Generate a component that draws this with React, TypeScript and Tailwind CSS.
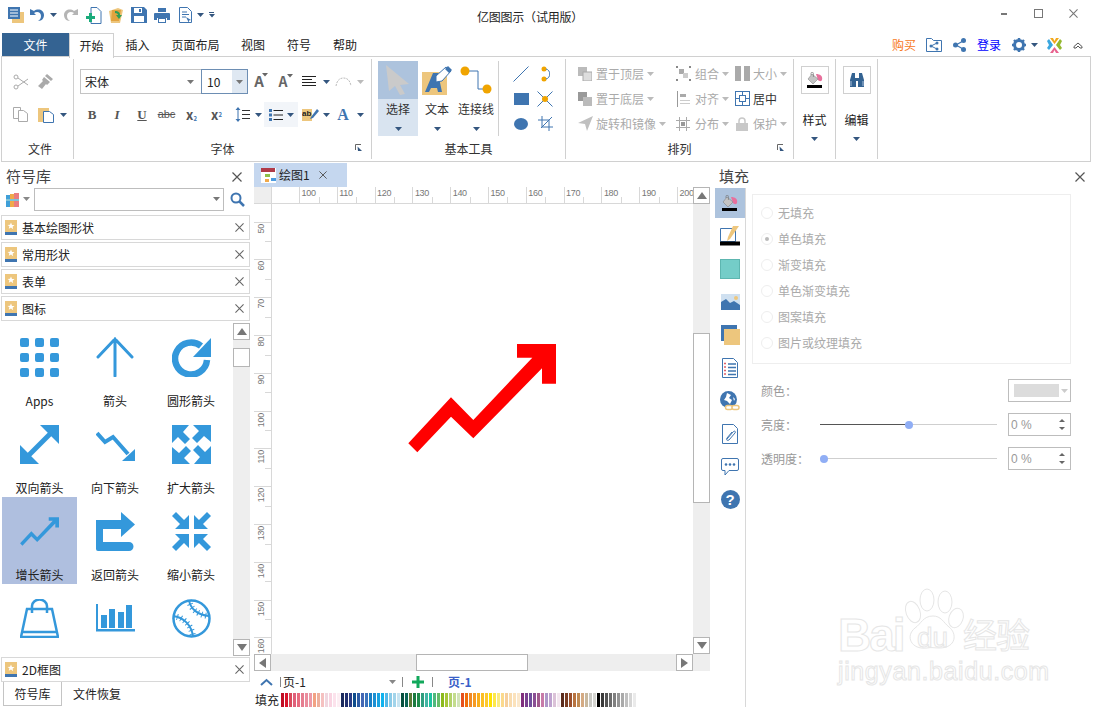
import React from 'react';
import type { ReactNode } from 'react';

const BLUE = '#3f75b0';
const SKY = '#3498db';
const GOLD = '#edc67d';

const Caret = ({ color = '#34567f', size = 3 }: { color?: string; size?: number }) => (
  <svg width={size * 2 + 1} height={size + 1} viewBox="0 0 7 4" className="shrink-0">
    <path d="M0 0h7L3.5 4z" fill={color} />
  </svg>
);

const Cross = ({ size = 9, color = '#666' }: { size?: number; color?: string }) => (
  <svg width={size} height={size} viewBox="0 0 10 10" className="shrink-0">
    <path d="M.5.5l9 9M9.5.5l-9 9" stroke={color} strokeWidth="1.2" fill="none" />
  </svg>
);

const Cell = ({ w, children }: { w: number; children?: ReactNode }) => (
  <div className="flex shrink-0 items-center justify-center h-full" style={{ width: w }}>
    {children}
  </div>
);

const GrowthArrow = ({ w, h, color }: { w: number; h: number; color: string }) => (
  <svg width={w} height={h} viewBox="408 344 148 109" className="shrink-0">
    <path d="M517 344h39v39.7h-14v-15.4l-68.7 70-22.3-21.6-33.7 35.6-9-9L451 397.3l22.3 22.7 59-62.3H517z" fill={color} />
  </svg>
);

/* quick access toolbar */
const QuickIcons = () => (
  <div className="flex items-center h-[30px] pl-[7px]">
    <Cell w={18}>
      <svg width="16" height="16" viewBox="0 0 16 16">
        <rect x="4" y="5" width="12" height="11" fill={GOLD} />
        <rect width="12" height="12" fill={BLUE} />
        <path d="M2 3h8M2 6h8M2 9h8" stroke="#fff" strokeWidth="1.2" />
      </svg>
    </Cell>
    <div className="w-[4px]" />
    <Cell w={16}>
      <svg width="16" height="14" viewBox="0 0 16 14">
        <path d="M1 1v6h6L5 5c3-2 7-1 7 3 0 2-1 4-3 5 4 0 6-3 6-6 0-5-6-7-10-4z" fill={BLUE} />
      </svg>
    </Cell>
    <div className="w-[3px]" />
    <Cell w={10}><Caret /></Cell>
    <div className="w-[4px]" />
    <Cell w={18}>
      <svg width="16" height="14" viewBox="0 0 16 14">
        <path d="M15 1v6H9l2-2C8 3 4 4 4 8c0 2 1 4 3 5-4 0-6-3-6-6 0-5 6-7 10-4z" fill="#b5b5b5" />
      </svg>
    </Cell>
    <div className="w-[3px]" />
    <Cell w={20}>
      <svg width="17" height="17" viewBox="0 0 17 17">
        <path d="M6 .5h6l4 4v12H6z" fill="#fff" stroke={BLUE} />
        <path d="M4 6v3H1v3h3v3h3v-3h3V9H7V6z" fill="#1aab7b" />
      </svg>
    </Cell>
    <div className="w-[3px]" />
    <Cell w={20}>
      <svg width="16" height="15" viewBox="0 0 16 15">
        <path d="M1 3l9-3 5 2-3 13H3z" fill={GOLD} />
        <path d="M4 2h9l-2 11H3z" fill="#e2a33f" />
        <path d="M7 3c3 0 5 1 5 4h2l-3 4-3-4h2c0-1-1-2-3-2z" fill="#2e9e57" />
      </svg>
    </Cell>
    <div className="w-[3px]" />
    <Cell w={20}>
      <svg width="16" height="16" viewBox="0 0 16 16">
        <path d="M0 0h13l3 3v13H0z" fill={BLUE} />
        <rect x="3" y="1" width="8" height="5" fill="#fff" />
        <rect x="3" y="9" width="10" height="6" fill="#fff" />
        <rect x="8" y="2" width="2" height="3" fill={BLUE} />
      </svg>
    </Cell>
    <div className="w-[3px]" />
    <Cell w={20}>
      <svg width="16" height="15" viewBox="0 0 16 15">
        <rect x="4" width="8" height="4" fill={BLUE} />
        <path d="M1 5h14a1 1 0 011 1v6h-3v-2H3v2H0V6a1 1 0 011-1z" fill={BLUE} />
        <rect x="4" y="10" width="8" height="5" fill={BLUE} />
        <rect x="5" y="11" width="6" height="3" fill="#fff" />
      </svg>
    </Cell>
    <div className="w-[3px]" />
    <Cell w={20}>
      <svg width="13" height="16" viewBox="0 0 13 16">
        <path d="M.5.5h8l4 4v11H.5z" fill="#fff" stroke={BLUE} />
        <path d="M3 5h5M3 7.500h7M3 10h4" stroke={BLUE} />
        <path d="M7 10l5 3-2 .5V16z" fill={BLUE} />
      </svg>
    </Cell>
    <Cell w={10}><Caret /></Cell>
    <div className="w-[3px]" />
    <div className="flex flex-col items-center gap-[1px] w-[7px]">
      <div className="w-[5px] h-[1px] bg-[#34567f]" />
      <Caret size={2.5} />
    </div>
  </div>
);

const TitleBar = () => (
  <div className="flex items-center h-[30px] relative shrink-0">
    <QuickIcons />
    <div className="w-[261px]" />
    <div className="text-[12px] text-[#222] tracking-[-0.2px] w-[108px] text-center mt-[3px]">亿图图示（试用版）</div>
    <div className="flex-1" />
    <div className="flex items-center h-[22px] pr-[3px] -mt-[4px]">
      <Cell w={35}><div className="w-[6px] h-[2px] bg-[#777] mt-[2px]" /></Cell>
      <Cell w={35}><div className="w-[9px] h-[9px] border border-[#777]" /></Cell>
      <Cell w={35}><Cross size={9} color="#777" /></Cell>
    </div>
  </div>
);

const MENU = [
  { t: '插入', w: 47 },
  { t: '页面布局', w: 69 },
  { t: '视图', w: 46 },
  { t: '符号', w: 46 },
  { t: '帮助', w: 46 },
];

const TabBar = () => (
  <div className="flex items-stretch h-[24px] mt-[3px] pl-[2px] shrink-0 text-[12px] text-[#222]">
    <div className="w-[67px] bg-[#346392] text-white flex items-center justify-center">文件</div>
    <div className="w-[45px] h-[25px] relative z-10 bg-white border border-b-0 border-[#d0d0d0] flex items-center justify-center">开始</div>
    {MENU.map((m) => (
      <div key={m.t} className="flex items-center justify-center" style={{ width: m.w }}>{m.t}</div>
    ))}
    <div className="flex-1" />
    <div className="flex items-center text-[12px]">
      <span className="text-[#f7781a] w-[24px]">购买</span>
      <div className="w-[10px]" />
      <svg width="16" height="14" viewBox="0 0 16 14" className="shrink-0">
        <path d="M.5.5h5l2 2h8v11H.5z" fill="#fff" stroke={BLUE} />
        <path d="M5 8l6-3M5 8l6 3" stroke={BLUE} />
        <circle cx="5" cy="8" r="1.500" fill={BLUE} />
        <circle cx="11" cy="5" r="1.500" fill={BLUE} />
        <circle cx="11" cy="11" r="1.500" fill={BLUE} />
      </svg>
      <div className="w-[11px]" />
      <svg width="13" height="14" viewBox="0 0 13 14" className="shrink-0">
        <path d="M3 7l7-4M3 7l7 4" stroke={BLUE} strokeWidth="1.200" />
        <circle cx="2.500" cy="7" r="2.500" fill={BLUE} />
        <circle cx="10.500" cy="2.500" r="2.500" fill={BLUE} />
        <circle cx="10.500" cy="11.500" r="2.500" fill={BLUE} />
      </svg>
      <div className="w-[11px]" />
      <span className="text-[#0000ff] w-[24px]">登录</span>
      <div className="w-[11px]" />
      <svg width="14" height="14" viewBox="0 0 14 14" className="shrink-0">
        <circle cx="7" cy="7" r="4.500" fill="none" stroke={BLUE} strokeWidth="3" />
        <path d="M7 0v14M0 7h14M2 2l10 10M12 2L2 12" stroke={BLUE} strokeWidth="2.400" strokeDasharray="2.600 8.800 2.600 0" />
      </svg>
      <div className="w-[5px]" />
      <Caret />
      <div className="w-[9px]" />
      <svg width="15" height="15" viewBox="0 0 15 15" className="shrink-0">
        <path d="M3 0h3l1.500 3L9 0h3L7.500 6z" fill="#f2a81d" />
        <path d="M0 3l2-2 4 6-4 5-2-2 2-3z" fill="#3aa7e0" />
        <path d="M15 3l-2-2-4 6 4 5 2-2-2-3z" fill="#94b82f" />
        <path d="M3 15h3l1.500-3L9 15h3L7.500 9z" fill="#e8638f" />
      </svg>
      <div className="w-[11px]" />
      <svg width="10" height="7" viewBox="0 0 10 7" className="shrink-0">
        <path d="M1 6V4.500L5 1l4 3.500V6H7L5 4 3 6z" fill="none" stroke="#555" />
      </svg>
      <div className="w-[11px]" />
    </div>
  </div>
);

const GroupLabel = ({ children, launcher }: { children: ReactNode; launcher?: boolean }) => (
  <div className="relative h-[18px] mb-[1px] flex items-center justify-center text-[12px] text-[#333] shrink-0">
    {children}
    {launcher && (
      <svg width="7" height="7" viewBox="0 0 7 7" className="absolute right-[9px] top-[4px]">
        <path d="M.5 6V.5H6" fill="none" stroke="#666" />
        <path d="M2.500 2.500L7 7H3z" fill="#34567f" />
      </svg>
    )}
  </div>
);

const FileGroup = () => (
  <div className="w-[72px] border-r border-[#d0d0d0] flex flex-col shrink-0 my-[2px]">
    <div className="flex-1 pt-[10px]">
      <div className="flex h-[25px] pl-[7px]">
        <Cell w={24}>
          <svg width="16" height="16" viewBox="0 0 16 16" fill="none" stroke="#aaa">
            <circle cx="3" cy="3" r="2" />
            <circle cx="3" cy="13" r="2" />
            <path d="M5 4l10 7M5 12l10-7" />
          </svg>
        </Cell>
        <Cell w={24}>
          <svg width="15" height="15" viewBox="0 0 15 15">
            <path d="M9 0l6 5-2 2-6-5zM6 3l6 5-3 3-1-1-4 5-4-3 5-5-1-1z" fill="#aaa" />
          </svg>
        </Cell>
      </div>
      <div className="flex h-[25px] mt-[8px] pl-[6px] items-center">
        <Cell w={24}>
          <svg width="15" height="15" viewBox="0 0 15 15" fill="#fff" stroke="#aaa">
            <path d="M.5.5h7v11h-7z" />
            <path d="M5.500 3.500h5l4 3v8h-9z" />
          </svg>
        </Cell>
        <Cell w={28}>
          <svg width="16" height="16" viewBox="0 0 16 16">
            <rect y="1" width="11" height="14" fill={GOLD} />
            <path d="M5.500 4.500h6l4 3v8h-10z" fill="#fff" stroke={BLUE} />
          </svg>
        </Cell>
        <Caret />
      </div>
    </div>
    <div className="pl-[5px]"><GroupLabel>文件</GroupLabel></div>
  </div>
);

const FontGroup = () => (
  <div className="w-[298px] border-r border-[#d0d0d0] flex flex-col shrink-0 my-[2px]">
    <div className="flex-1 pt-[10px] pl-[6px]">
      <div className="flex h-[25px]">
        <div className="w-[122px] border border-[#c4c4c4] flex items-center pl-[4px] pr-[7px] justify-between text-[12px] text-[#222]">
          <span>宋体</span>
          <Caret color="#777" />
        </div>
        <div className="w-[47px] border border-[#6d8eb3] flex items-center text-[12px] text-[#222] -ml-[1px]">
          <span className="pl-[5px] flex-1">10</span>
          <div className="w-[15px] h-full bg-[#dfe8f2] flex items-center justify-center"><Caret color="#777" /></div>
        </div>
        <Cell w={22}>
          <span className="text-[15px] font-bold text-[#666] relative">A<span className="absolute -right-[4px] top-[3px]"><Caret color="#666" size={2.5} /></span></span>
        </Cell>
        <Cell w={26}>
          <span className="text-[14px] font-bold text-[#666] relative">A<span className="absolute -right-[6px] top-[3px]"><Caret color="#666" size={2.5} /></span></span>
        </Cell>
        <Cell w={26}>
          <svg width="14" height="12" viewBox="0 0 14 12"><path d="M0 .5h14M0 3.500h10M0 6.500h14M0 9.500h14" stroke="#222" /></svg>
        </Cell>
        <Cell w={8}><Caret /></Cell>
        <Cell w={26}>
          <svg width="17" height="9" viewBox="0 0 17 9" fill="none" stroke="#bbb" strokeDasharray="2 1"><path d="M1 9C2 3 5 1 8.500 1S15 3 16 9" /></svg>
        </Cell>
        <Cell w={8}><Caret color="#bbb" /></Cell>
      </div>
      <div className="flex h-[25px] mt-[8px] items-center text-[#555]">
        <Cell w={24}><span className="font-['Liberation_Serif',serif] font-bold text-[13px]">B</span></Cell>
        <Cell w={26}><span className="font-['Liberation_Serif',serif] font-bold italic text-[13px]">I</span></Cell>
        <Cell w={24}><span className="font-['Liberation_Serif',serif] font-bold underline text-[13px]">U</span></Cell>
        <Cell w={25}><span className="font-['Liberation_Sans',sans-serif] text-[11px] line-through">abc</span></Cell>
        <Cell w={25}><span className="font-bold text-[13px]">x<sub className="text-[6px] text-[#3f75b0]">2</sub></span></Cell>
        <Cell w={25}><span className="font-bold text-[13px]">x<sup className="text-[6px] text-[#3f75b0]">2</sup></span></Cell>
        <Cell w={26}>
          <svg width="15" height="15" viewBox="0 0 15 15">
            <path d="M3 0l2.500 3h-5zM3 15l2.500-3h-5zM2.500 3h1v9h-1z" fill={BLUE} />
            <path d="M7 3.500h8M7 7.500h8M7 11.500h8" stroke="#333" />
          </svg>
        </Cell>
        <Cell w={7}><Caret /></Cell>
        <div className="w-[2px]" />
        <div className="w-[34px] h-[25px] bg-[#f2f5f9] flex items-center pl-[5px] gap-[4px]">
          <svg width="14" height="12" viewBox="0 0 14 12">
            <path d="M0 0h3v3H0zM0 4.500h3v3H0zM0 9h3v3H0z" fill={BLUE} />
            <path d="M4.500 1.500H14M4.500 6H14M4.500 10.500H14" stroke="#222" />
          </svg>
          <Caret />
        </div>
        <Cell w={24}>
          <svg width="17" height="13" viewBox="0 0 17 13">
            <rect y="1" width="10" height="12" fill={GOLD} />
            <path d="M9 9l6-8 2 2-6 7-3 1z" fill={BLUE} />
            <text x="0" y="8" fontSize="8" fontWeight="700" fill="#222" fontFamily="Liberation Sans">ab</text>
          </svg>
        </Cell>
        <Cell w={8}><Caret /></Cell>
        <Cell w={26}><span className="font-['Liberation_Serif',serif] font-bold text-[16px] text-[#3f75b0]">A</span></Cell>
        <Cell w={8}><Caret /></Cell>
      </div>
    </div>
    <GroupLabel launcher>字体</GroupLabel>
  </div>
);

const BigTool = ({ w, label, children, active }: { w: number; label: string; children: ReactNode; active?: boolean }) => (
  <div className={`flex flex-col items-center shrink-0 ${active ? 'bg-[#d9e4f0]' : ''}`} style={{ width: w }}>
    <div className={`w-full h-[38px] flex items-center justify-center ${active ? 'bg-[#adc3dd]' : ''}`}>{children}</div>
    <div className="text-[12px] text-[#333] h-[20px] flex items-center whitespace-nowrap">{label}</div>
    <div className="mt-[8px]"><Caret /></div>
  </div>
);

const BasicTools = () => (
  <div className="w-[194px] border-r border-[#d0d0d0] flex flex-col shrink-0 my-[2px]">
    <div className="flex-1 pt-[2px] pl-[6px] flex">
      <div className="flex h-[75px]">
        <BigTool w={40} label="选择" active>
          <svg width="24" height="30" viewBox="0 0 24 30">
            <path d="M0 0l23 19-9 1 5 9-5 1-5-9-6 5z" fill="#cacaca" />
          </svg>
        </BigTool>
        <BigTool w={38} label="文本">
          <svg width="30" height="29" viewBox="0 0 30 29">
            <rect y="6" width="25" height="23" fill={GOLD} />
            <path d="M3 26L11 7h5l4 19h-4l-1-4H9l-2 4z" fill={BLUE} />
            <path d="M14 10l10-9 5 4-9 10-6 1z" fill="#fff" stroke={BLUE} />
            <path d="M23 3l3-3 4 4-3 3z" fill={BLUE} />
          </svg>
        </BigTool>
        <BigTool w={40} label="连接线">
          <svg width="32" height="28" viewBox="0 0 32 28">
            <path d="M6 5h12v18h10" fill="none" stroke={BLUE} />
            <circle cx="5" cy="5" r="4.500" fill="#f0a400" />
            <circle cx="27" cy="23" r="4.500" fill="#f0a400" />
          </svg>
        </BigTool>
      </div>
      <div className="w-[1px] h-[75px] ml-[2px] bg-[#d0d0d0]" />
      <div className="grid grid-cols-[24px_24px] auto-rows-[25px] ml-[10px] h-[75px]">
        {[
          <svg key="a" width="16" height="16" viewBox="0 0 16 16"><path d="M.5 15.500l15-15" stroke={BLUE} /></svg>,
          <svg key="b" width="9" height="16" viewBox="0 0 9 16"><circle cx="3" cy="3" r="2.500" fill="#f0a400" /><circle cx="3" cy="13" r="2.500" fill="#f0a400" /><path d="M5 3c5 1 5 9 0 10" fill="none" stroke={BLUE} /></svg>,
          <div key="c" className="w-[15px] h-[12px] bg-[#3f75b0]" />,
          <svg key="d" width="16" height="16" viewBox="0 0 16 16"><path d="M.5.500l15 15M15.500.500l-15 15" stroke={BLUE} /><circle cx="8" cy="8" r="3" fill="#f0a400" /></svg>,
          <div key="e" className="w-[14px] h-[12px] rounded-[50%] bg-[#3f75b0]" />,
          <svg key="f" width="15" height="15" viewBox="0 0 15 15" fill="none" stroke={BLUE}><path d="M0 4h11v11M4 0v11h11M3 12L14 1" /></svg>,
        ].map((icon, i) => (
          <div key={i} className="flex items-center justify-center">{icon}</div>
        ))}
      </div>
    </div>
    <GroupLabel>基本工具</GroupLabel>
  </div>
);

const Stack = ({ flip }: { flip?: boolean }) => (
  <svg width="14" height="14" viewBox="0 0 14 14">
    <rect width="9" height="9" fill={flip ? '#999' : '#bbb'} />
    <rect x="5" y="5" width="9" height="9" fill={flip ? '#bbb' : '#ddd'} stroke={flip ? 'none' : '#aaa'} />
  </svg>
);

const ArrangeItem = ({ icon, text, w, iw, active }: { icon: ReactNode; text: string; w: number; iw: number; active?: boolean }) => (
  <div className="flex items-center h-[25px]" style={{ width: w }}>
    <div className="flex justify-center shrink-0" style={{ width: iw }}>{icon}</div>
    <span className={`text-[12px] whitespace-nowrap ${active ? 'text-[#333]' : 'text-[#aaa]'}`}>{text}</span>
    {!active && <span className="ml-[3px]"><Caret color="#bbb" /></span>}
  </div>
);

const Arrange = () => (
  <div className="w-[228px] border-r border-[#d0d0d0] flex flex-col shrink-0 my-[2px]">
    <div className="flex-1 pt-[2px] pl-[8px] flex">
      <div className="w-[96px]">
        <ArrangeItem w={96} iw={22} text="置于顶层" icon={<Stack />} />
        <ArrangeItem w={96} iw={22} text="置于底层" icon={<Stack flip />} />
        <ArrangeItem w={96} iw={22} text="旋转和镜像" icon={
          <svg width="15" height="15" viewBox="0 0 15 15"><path d="M15 0L0 7l7 1 2 7z" fill="#c0c0c0" /></svg>
        } />
      </div>
      <div className="w-[60px] ml-[1px]">
        <ArrangeItem w={60} iw={24} text="组合" icon={
          <svg width="15" height="15" viewBox="0 0 15 15"><path d="M0 0h2v2H0zM13 0h2v2h-2zM0 13h2v2H0zM13 13h2v2h-2z" fill="#888" /><rect x="3" y="3" width="5" height="5" fill="#aaa" /><rect x="7" y="7" width="5" height="5" fill="#ccc" /></svg>
        } />
        <ArrangeItem w={60} iw={24} text="对齐" icon={
          <svg width="13" height="16" viewBox="0 0 13 16"><path d="M.5 0v16" stroke="#999" /><path d="M3 3h6v3H3z" fill="#aaa" /><path d="M3 9h10v1H3zM3 12h10v1H3z" fill="#ccc" /></svg>
        } />
        <ArrangeItem w={60} iw={24} text="分布" icon={
          <svg width="14" height="14" viewBox="0 0 14 14" fill="none" stroke="#aaa"><path d="M3.500 0v14M10.500 0v14M0 3.500h14M0 10.500h14" /><rect x="5" y="5" width="4" height="4" fill="#999" stroke="none" /></svg>
        } />
      </div>
      <div className="w-[60px]">
        <ArrangeItem w={60} iw={22} text="大小" icon={
          <div className="flex gap-[3px]"><div className="w-[6px] h-[15px] bg-[#aaa]" /><div className="w-[6px] h-[15px] bg-[#aaa]" /></div>
        } />
        <ArrangeItem w={60} iw={22} text="居中" active icon={
          <svg width="15" height="15" viewBox="0 0 15 15" fill="none" stroke={BLUE}><rect x=".5" y=".5" width="14" height="14" /><rect x="4.500" y="4.500" width="6" height="6" /><path d="M7.500 0v4.500M7.500 10.500V15M0 7.500h4.500M10.500 7.500H15" /></svg>
        } />
        <ArrangeItem w={60} iw={22} text="保护" icon={
          <svg width="12" height="14" viewBox="0 0 12 14"><rect y="6" width="12" height="8" fill="#c8c8c8" /><path d="M3 6V4a3 3 0 016 0v2" fill="none" stroke="#c8c8c8" strokeWidth="1.500" /></svg>
        } />
      </div>
    </div>
    <GroupLabel launcher>排列</GroupLabel>
  </div>
);

const BoxTool = ({ label, children }: { label: string; children: ReactNode }) => (
  <div className="w-[42px] border-r border-[#d0d0d0] flex flex-col items-center shrink-0 my-[2px] pt-[7px]">
    <div className="w-[28px] h-[28px] border border-[#d0d0d0] flex items-center justify-center">{children}</div>
    <div className="text-[12px] text-[#222] mt-[17px]">{label}</div>
    <div className="mt-[8px]"><Caret /></div>
  </div>
);

const Bucket = () => (
  <svg width="16" height="16" viewBox="0 0 16 16">
    <path d="M9 2c4 0 7 2 6 6-1 2-3 1-4 0z" fill="#e8709c" />
    <path d="M5 2l6 5-5 5-5-5z" fill="#c4c4c4" stroke="#777" strokeWidth=".5" />
    <path d="M4 3V1.500a1.200 1.200 0 012.400 0V5" fill="none" stroke="#777" strokeWidth=".7" />
    <rect y="13" width="15" height="3" fill="#000" />
  </svg>
);

const Ribbon = () => (
  <div className="h-[106px] mx-[1px] mr-[3px] border border-[#d0d0d0] -mt-[1px] flex shrink-0">
    <FileGroup />
    <FontGroup />
    <BasicTools />
    <Arrange />
    <BoxTool label="样式"><Bucket /></BoxTool>
    <BoxTool label="编辑">
      <svg width="16" height="16" viewBox="0 0 16 16" fill="#346392">
        <path d="M1 8l2-7h3v5h4V1h3l2 7v7h-6V9H7v6H1z" />
        <path d="M2 9v5M14 9v5" stroke="#a9c0da" />
      </svg>
    </BoxTool>
  </div>
);

const Scrollbtn = ({ dir }: { dir: 'up' | 'down' | 'left' | 'right' }) => {
  const d = { up: 'M0 7L5 0l5 7z', down: 'M0 0l5 7 5-7z', left: 'M7 0v10L0 5z', right: 'M0 0v10l7-5z' }[dir];
  const vert = dir === 'up' || dir === 'down';
  return (
    <div className="w-[17px] h-[17px] shrink-0 bg-white border border-[#b5b5b5] flex items-center justify-center">
      <svg width={vert ? 10 : 7} height={vert ? 7 : 10} viewBox={vert ? '0 0 10 7' : '0 0 7 10'}><path d={d} fill="#777" /></svg>
    </div>
  );
};

const PaneRow = ({ label }: { label: string }) => (
  <div className="h-[25px] border border-[#d8d8d8] flex items-center pl-[3px] pr-[5px] mb-[2px] text-[12px] text-[#222]">
    <svg width="12" height="15" viewBox="0 0 12 15" className="shrink-0">
      <rect width="12" height="12" fill={GOLD} />
      <rect y="12" width="12" height="3" fill={BLUE} />
      <path d="M6 2.500l1 2.400 2.500.2-1.900 1.600.6 2.500L6 7.400 3.800 8.700l.6-2.500L2.500 5l2.500-.2z" fill="#fff" />
    </svg>
    <span className="ml-[5px] flex-1">{label}</span>
    <Cross />
  </div>
);

type Shape = { label?: string; svg: ReactNode };

const Rays = ({ inward }: { inward?: boolean }) => (
  <svg width="39" height="39" viewBox="0 0 39 39" fill={SKY}>
    {[0, 90, 180, 270].map((r) => (
      <g key={r} transform={`rotate(${r} 19.5 19.5)`}>
        <path d={inward ? 'M4 0L0 4l8 8-5 5h14V3l-5 5z' : 'M0 0h17l-6 7 7 7-5 5-7-7-6 6z'} />
      </g>
    ))}
  </svg>
);

const SHAPES: Shape[] = [
  {
    label: 'Apps',
    svg: (
      <div className="grid grid-cols-3 gap-[6px]">
        {Array.from({ length: 9 }).map((_, i) => (
          <div key={i} className="w-[9px] h-[9px] rounded-[2px] bg-[#3498db]" />
        ))}
      </div>
    ),
  },
  {
    label: '箭头',
    svg: (
      <svg width="38" height="40" viewBox="0 0 38 40" fill="none" stroke={SKY} strokeWidth="3" strokeLinecap="round">
        <path d="M19 39V2M2 20L19 2l17 18" />
      </svg>
    ),
  },
  {
    label: '圆形箭头',
    svg: (
      <svg width="39" height="39" viewBox="0 0 39 39" fill="none">
        <path d="M29 8A16 16 0 1 0 35 22" stroke={SKY} strokeWidth="6.500" />
        <path d="M39 0v19H21z" fill={SKY} />
      </svg>
    ),
  },
  {
    label: '双向箭头',
    svg: (
      <svg width="39" height="39" viewBox="0 0 39 39" fill={SKY}>
        <path d="M6 33L33 6" stroke={SKY} strokeWidth="5" />
        <path d="M20 0h19v19zM0 20v19h19z" />
      </svg>
    ),
  },
  {
    label: '向下箭头',
    svg: (
      <svg width="39" height="35" viewBox="0 0 39 35" fill={SKY}>
        <path d="M1 6l8 9 8-5 15 17" fill="none" stroke={SKY} strokeWidth="4" />
        <path d="M39 22v12H26z" />
      </svg>
    ),
  },
  { label: '扩大箭头', svg: <Rays /> },
  { label: '增长箭头', svg: <GrowthArrow w={39} h={29} color={SKY} /> },
  {
    label: '返回箭头',
    svg: (
      <svg width="39" height="39" viewBox="0 0 39 39" fill={SKY}>
        <path d="M25 0l14 12.500L25 25v-8H7v13h26a3 3 0 010 9H2a2 2 0 01-2-2V8h25z" />
      </svg>
    ),
  },
  { label: '缩小箭头', svg: <Rays inward /> },
  {
    svg: (
      <svg width="39" height="39" viewBox="0 0 39 39" fill="none" stroke={SKY} strokeWidth="2.500">
        <path d="M7 10h25l6 28H1zM2 33h35" />
        <path d="M12 14V7a7 6 0 0115 0v7" />
      </svg>
    ),
  },
  {
    svg: (
      <svg width="39" height="28" viewBox="0 0 39 28" fill={SKY}>
        <path d="M0 0h2v25h37v2.500H0z" />
        <path d="M5 11h6v13H5zM13 5h6v19h-6zM22 8h6v16h-6zM30 1h6v23h-6z" />
      </svg>
    ),
  },
  {
    svg: (
      <svg width="39" height="39" viewBox="0 0 39 39" fill="none" stroke={SKY}>
        <circle cx="19.500" cy="19.500" r="18" strokeWidth="2.500" />
        <path d="M17 1c1 8 8 15 20 16M1 17c10 1 19 9 20 21" strokeWidth="2" />
        <path d="M17 1c1 8 8 15 20 16M1 17c10 1 19 9 20 21" strokeWidth="6" strokeDasharray="1 3" />
      </svg>
    ),
  },
];

const SymbolPane = () => (
  <div className="w-[250px] shrink-0 flex flex-col pl-[1px]">
    <div className="flex items-center justify-between h-[26px] pl-[5px] pr-[8px] pt-[3px]">
      <span className="text-[15px] text-[#444]">符号库</span>
      <Cross size={10} color="#555" />
    </div>
    <div className="flex items-center h-[22px] mb-[5px] pl-[5px]">
      <svg width="14" height="15" viewBox="0 0 14 15" className="shrink-0">
        <rect y="3" width="4" height="12" fill="#3f9fd8" />
        <rect x="4" y="2" width="4" height="13" fill="#f0a94a" />
        <rect x="8" y="1" width="5" height="14" fill="#ea7d80" />
        <rect y="7" width="13" height="2" fill="#7fc3d8" />
      </svg>
      <span className="ml-[3px] mr-[4px]"><Caret color="#888" /></span>
      <div className="w-[190px] h-[23px] border border-[#bdbdbd] flex items-center justify-end pr-[3px] shrink-0">
        <Caret color="#777" />
      </div>
      <svg width="15" height="15" viewBox="0 0 15 15" className="ml-[6px] shrink-0" fill="none" stroke={BLUE}>
        <circle cx="6" cy="6" r="4.500" strokeWidth="2" />
        <path d="M9.500 9.500L14 14" strokeWidth="2.500" />
      </svg>
    </div>
    <PaneRow label="基本绘图形状" />
    <PaneRow label="常用形状" />
    <PaneRow label="表单" />
    <PaneRow label="图标" />
    <div className="flex h-[333px]">
      <div className="flex-1 overflow-hidden pl-[1px]">
        <div className="grid grid-cols-[75px_76px_76px] auto-rows-[87px]">
          {SHAPES.map((s, i) => (
            <div key={i} className={`flex flex-col items-center ${s.label === '增长箭头' ? 'bg-[#afbfdf]' : ''}`}>
              <div className="h-[70px] pb-[2px] flex items-center justify-center">{s.svg}</div>
              {s.label && <div className="text-[12px] text-[#222] -mt-[1px]">{s.label}</div>}
            </div>
          ))}
        </div>
      </div>
      <div className="w-[17px] shrink-0 bg-[#eeeeee] flex flex-col justify-between">
        <div>
          <Scrollbtn dir="up" />
          <div className="w-[17px] h-[19px] mt-[8px] bg-white border border-[#b5b5b5]" />
        </div>
        <Scrollbtn dir="down" />
      </div>
    </div>
    <div className="mt-[1px]"><PaneRow label="2D框图" /></div>
    <div className="flex text-[12px] text-[#222] -mt-[2px] pl-[2px]">
      <div className="w-[59px] h-[24px] border border-t-0 border-[#c4c4c4] flex items-center justify-center">符号库</div>
      <div className="ml-[11px] h-[24px] flex items-center">文件恢复</div>
    </div>
  </div>
);

const RULER_X = Array.from({ length: 11 }, (_, i) => 100 + i * 10);
const RULER_Y = Array.from({ length: 12 }, (_, i) => 50 + i * 10);

const TopRuler = () => (
  <div className="flex h-[17px] border-b border-[#d8d8d8] shrink-0">
    <div className="w-[18px] bg-[#eeeeee] border-r border-[#d8d8d8] shrink-0" />
    <div className="flex-1 flex overflow-hidden text-[9px] tracking-[-0.3px] text-[#777] font-['Liberation_Sans',sans-serif]">
      <div className="w-[27px] shrink-0" />
      {RULER_X.map((n) => (
        <div key={n} className="w-[37.800px] shrink-0 relative border-l border-[#d8d8d8] pl-[1.500px] pt-[1px] leading-[11px]">
          {n}
          <div className="absolute left-[18.500px] bottom-0 w-[1px] h-[6px] bg-[#d8d8d8]" />
        </div>
      ))}
    </div>
  </div>
);

const LeftRuler = () => (
  <div className="w-[18px] shrink-0 border-r border-[#d8d8d8] overflow-hidden text-[9px] tracking-[-0.3px] text-[#777] font-['Liberation_Sans',sans-serif]">
    <div className="h-[17.700px]" />
    {RULER_Y.map((n) => (
      <div key={n} className="h-[37.800px] relative border-t border-[#d8d8d8]">
        <span className="absolute left-[2px] top-[1px] [writing-mode:vertical-rl] rotate-180 leading-[11px]">{n}</span>
        <div className="absolute right-0 top-[18.500px] w-[6px] h-[1px] bg-[#d8d8d8]" />
      </div>
    ))}
  </div>
);

const SWATCHES = [
  '#c00d23', '#d8142b', '#d94a5c', '#e0607a', '#e86a7e', '#e57d8f', '#ea8d9d', '#ec9aa8', '#f2a283', '#eeaf9c', '#f5c1c0', '#f0d6df', '#f9d5e2', '#fce2ec', '#fdeef3',
  '#1b2a5e', '#22306f', '#2a3c85', '#0e4c8c', '#2e5ca5', '#4266b3', '#3c73bb', '#1a7ec4', '#1d8fd2', '#1aa3e0', '#0fb2ee', '#53b8e8', '#8ccbe8', '#a2d4ea', '#c7e4f1',
  '#07503e', '#0b6455', '#5a7a36', '#1a7a40', '#1f8c4c', '#2e9e7e', '#42b5a4', '#1cc0a0', '#4fb87c', '#66bc6a', '#8cb91c', '#a8c63a', '#b4d26a', '#c4dc8e', '#d2e4b8',
  '#e5501c', '#ef6f0a', '#f08a24', '#f59a23', '#f8ae1c', '#fbbf24', '#fec92e', '#ffe000', '#fde84a', '#fbeb80', '#fbd98c', '#f6cf9c', '#f9dcb0', '#fbe2bc', '#fbe8cc',
  '#7f2f7e', '#7a4190', '#6f4f9b', '#8a4f94', '#a05a8c', '#c77aa8', '#ae97c8', '#bfa3cf', '#dbc2d8', '#f3e6ef',
  '#5c2c1c', '#7a3e24', '#9a4f2c', '#b87340', '#c08a52', '#d4aa82', '#c8b89e', '#c9c9c4', '#d4d4d0',
  '#000000', '#3a3a3a', '#555555', '#6b6b6b', '#808080', '#959595', '#aaaaaa', '#c0c0c0', '#d5d5d5', '#eaeaea',
];

const CenterPane = () => (
  <div className="w-[456px] ml-[4px] shrink-0 flex flex-col">
    <div className="w-[93px] h-[24px] mt-[1px] bg-[#c5d7ef] flex items-center pl-[7px] text-[12px] text-[#222] shrink-0">
      <svg width="15" height="15" viewBox="0 0 15 15" className="shrink-0">
        <rect width="15" height="15" fill="#fff" />
        <rect width="14" height="4" fill="#b03a48" />
        <rect x="4" y="6" width="5" height="3" fill="#8fc04a" />
        <rect x="4" y="11" width="4" height="3" fill="#f0a94a" />
        <rect x="10" y="10" width="5" height="3" fill="#4b9be0" />
      </svg>
      <span className="ml-[3px] text-[12px]">绘图1</span>
      <span className="ml-[9px]"><Cross size={8} color="#555" /></span>
    </div>
    <div className="flex h-[467px] shrink-0">
      <div className="w-[439px] flex flex-col">
        <TopRuler />
        <div className="flex flex-1 min-h-0">
          <LeftRuler />
          <div className="flex-1 relative min-w-0">
            <div className="absolute left-[136px] top-[140px]">
              <GrowthArrow w={148} h={109} color="#ff0000" />
            </div>
          </div>
        </div>
      </div>
      <div className="w-[17px] bg-[#eeeeee] flex flex-col shrink-0">
        <Scrollbtn dir="up" />
        <div className="w-[17px] h-[170px] mt-[129px] bg-white border border-[#b5b5b5]" />
        <div className="flex-1" />
        <Scrollbtn dir="down" />
      </div>
    </div>
    <div className="flex h-[17px] bg-[#eeeeee] shrink-0">
      <Scrollbtn dir="left" />
      <div className="w-[112px] h-[17px] ml-[145px] bg-white border border-[#b5b5b5]" />
      <div className="w-[148px]" />
      <Scrollbtn dir="right" />
    </div>
    <div className="flex items-center h-[21px] shrink-0 text-[12px] text-[#222]">
      <svg width="13" height="8" viewBox="0 0 13 8" className="ml-[6px] shrink-0">
        <path d="M1 7l5.500-5L12 7" fill="none" stroke={BLUE} strokeWidth="2" />
      </svg>
      <div className="w-[1px] h-[10px] bg-[#888] ml-[7px]" />
      <span className="ml-[2px] w-[106px]">页-1</span>
      <Caret color="#888" />
      <div className="w-[1px] h-[10px] bg-[#888] ml-[6px]" />
      <svg width="12" height="12" viewBox="0 0 12 12" className="ml-[9px] shrink-0">
        <path d="M4.500 0h3v4.500H12v3H7.500V12h-3V7.500H0v-3h4.500z" fill="#12a85b" />
      </svg>
      <div className="w-[1px] h-[10px] bg-[#888] ml-[8px]" />
      <span className="ml-[15px] text-[#3a5fc8] font-bold">页-1</span>
    </div>
    <div className="flex items-center h-[15px] text-[12px] text-[#222] shrink-0 pl-[1px]">
      <span className="w-[26px] shrink-0">填充</span>
      {SWATCHES.map((c, i) => (
        <div key={i} className="w-[3px] h-[14px] mr-[1px] shrink-0" style={{ backgroundColor: c }} />
      ))}
    </div>
  </div>
);

const SIDE_ICONS: ReactNode[] = [
  <Bucket key="0" />,
  <svg key="1" width="20" height="20" viewBox="0 0 20 20">
    <path d="M.5 2.500h15v13H.5z" fill="#fff" stroke={BLUE} />
    <path d="M13 0h6l-9 13-3 2 1-4z" fill={GOLD} />
    <rect y="15.500" width="20" height="4" fill="#000" />
  </svg>,
  <div key="2" className="w-[20px] h-[20px] bg-[#74cdc8] border border-[#5db6b0]" />,
  <svg key="3" width="19" height="16" viewBox="0 0 19 16">
    <rect width="19" height="16" fill="#cfe0f0" />
    <circle cx="15" cy="4" r="2" fill={GOLD} />
    <path d="M0 8l5-3 4 4 4-2 6 4v5H0z" fill={BLUE} />
  </svg>,
  <svg key="4" width="19" height="20" viewBox="0 0 19 20">
    <rect width="16" height="16" fill={BLUE} />
    <rect x="3" y="4" width="16" height="16" fill={GOLD} />
  </svg>,
  <svg key="5" width="16" height="20" viewBox="0 0 16 20">
    <path d="M.5.500h11l4 4v15H.5z" fill="#fff" stroke={BLUE} />
    <path d="M6 6h8M6 9.500h8M6 13h8M6 16.500h8" stroke={BLUE} strokeWidth="1.300" />
    <path d="M2 5.500h2M2 9h2M2 12.500h2M2 16h2" stroke="#e0606a" strokeWidth="1.300" />
  </svg>,
  <svg key="6" width="20" height="20" viewBox="0 0 20 20">
    <circle cx="8.500" cy="8.500" r="8.500" fill={BLUE} />
    <path d="M7 2l4 2-2 3 3 2-2 4-3-3-3-1 2-3zM13 6l2 2-1 2z" fill="#fff" />
    <rect x="5.500" y="14.500" width="7" height="4" rx="2" fill="#fff" stroke={GOLD} strokeWidth="1.500" />
    <rect x="12" y="14.500" width="7" height="4" rx="2" fill="#fff" stroke={GOLD} strokeWidth="1.500" />
  </svg>,
  <svg key="7" width="16" height="20" viewBox="0 0 16 20" fill="none" stroke={BLUE}>
    <path d="M.5.500h11l4 4v15H.5z" fill="#fff" />
    <path d="M5 15l6-7c2-2 3 0 2 1l-6 7c-2 1-3 0-2-2l5-6" />
  </svg>,
  <svg key="8" width="18" height="18" viewBox="0 0 18 18">
    <path d="M2 .5h14A1.500 1.500 0 0117.500 2v9a1.500 1.500 0 01-1.500 1.500H8L4 17v-4.500H2A1.500 1.500 0 01.500 11V2A1.500 1.500 0 012 .5z" fill="#fff" stroke={BLUE} />
    <circle cx="5" cy="6.500" r="1.300" fill={BLUE} />
    <circle cx="9" cy="6.500" r="1.300" fill={BLUE} />
    <circle cx="13" cy="6.500" r="1.300" fill={BLUE} />
  </svg>,
  <div key="9" className="w-[19px] h-[19px] rounded-full bg-[#3f75b0] text-white font-bold text-[15px] leading-[19px] text-center font-['Liberation_Sans',sans-serif]">?</div>,
];

const FILLS = ['无填充', '单色填充', '渐变填充', '单色渐变填充', '图案填充', '图片或纹理填充'];

const NumberBox = () => (
  <div className="w-[63px] h-[23px] border border-[#bdbdbd] flex items-center justify-between pl-[2px] pr-[5px] text-[12px] text-[#999] font-['Liberation_Sans',sans-serif] shrink-0">
    <span>0 %</span>
    <div className="flex flex-col gap-[5px]">
      <svg width="6" height="3" viewBox="0 0 6 3"><path d="M0 3l3-3 3 3z" fill="#666" /></svg>
      <svg width="6" height="3" viewBox="0 0 6 3"><path d="M0 0l3 3 3-3z" fill="#666" /></svg>
    </div>
  </div>
);

const Slider = ({ pos }: { pos: number }) => (
  <div className="w-[177px] h-[10px] relative shrink-0">
    <div className="absolute inset-x-0 top-[4px] h-[1px] bg-[#cfcfcf]" />
    <div className="absolute left-0 top-[4px] h-[1px] bg-[#555]" style={{ width: pos }} />
    <div className="absolute top-[1px] w-[8px] h-[8px] rounded-full bg-[#90aef5]" style={{ left: pos }} />
  </div>
);

const FillPane = () => (
  <div className="flex-1 flex flex-col min-w-0">
    <div className="flex items-center justify-between h-[26px] pl-[9px] pr-[9px] pt-[3px] shrink-0">
      <span className="text-[15px] text-[#444]">填充</span>
      <Cross size={10} color="#555" />
    </div>
    <div className="flex flex-1 pl-[5px]">
      <div className="w-[31px] border-r border-[#d8d8d8] flex flex-col shrink-0">
        {SIDE_ICONS.map((icon, i) => (
          <div key={i} className={`w-[30px] flex items-center justify-center ${i === 0 ? 'bg-[#adc3dd] h-[30px] mb-[1px]' : 'h-[33px]'}`}>
            {icon}
          </div>
        ))}
      </div>
      <div className="flex-1 pl-[6px] min-w-0">
        <div className="w-[319px] h-[170px] mt-[6px] border border-[#eeeeee] pt-[5px] pl-[8px]">
          {FILLS.map((f, i) => (
            <div key={f} className="flex items-center h-[26px] text-[12px] text-[#aaa]">
              <div className="w-[12px] h-[12px] rounded-full border border-[#eeeeee] flex items-center justify-center">
                {i === 1 && <div className="w-[4px] h-[4px] rounded-full bg-[#bbb]" />}
              </div>
              <span className="ml-[5px]">{f}</span>
            </div>
          ))}
        </div>
        <div className="mt-[15px] pl-[9px] text-[12px] text-[#999] w-[319px]">
          <div className="flex items-center h-[23px]">
            <span className="flex-1">颜色：</span>
            <div className="w-[63px] h-[23px] border border-[#bdbdbd] flex items-center pl-[5px] pr-[2px] gap-[2px] shrink-0">
              <div className="w-[47px] h-[13px] bg-[#dcdcdc]" />
              <Caret color="#ccc" />
            </div>
          </div>
          <div className="flex items-center h-[23px] mt-[11px]">
            <span className="w-[59px]">亮度：</span>
            <Slider pos={85} />
            <div className="w-[11px]" />
            <NumberBox />
          </div>
          <div className="flex items-center h-[23px] mt-[11px]">
            <span className="w-[59px]">透明度：</span>
            <Slider pos={0} />
            <div className="w-[11px]" />
            <NumberBox />
          </div>
        </div>
      </div>
    </div>
  </div>
);

const Watermark = () => (
  <div className="absolute left-[838px] top-[588px] w-[200px] h-[100px] pointer-events-none font-['Liberation_Sans',sans-serif] text-transparent [-webkit-text-stroke:1px_#e6e6e6]">
    <div className="absolute left-0 top-[22px] text-[46px] font-bold leading-[50px] tracking-[-2px]">Bai</div>
    <svg width="62" height="64" viewBox="0 0 62 64" className="absolute left-[66px] top-[0px]" fill="none" stroke="#e6e6e6">
      <ellipse cx="9" cy="24" rx="7" ry="11" transform="rotate(-20 9 24)" />
      <ellipse cx="23" cy="12" rx="7" ry="11" />
      <ellipse cx="41" cy="14" rx="7" ry="11" />
      <ellipse cx="52" cy="30" rx="7" ry="10" transform="rotate(20 52 30)" />
      <path d="M29 28c8 0 10 6 16 11 8 6 8 21-10 21-4 0-8-1-12 0-16 2-22-12-12-20 6-4 8-12 18-12z" />
    </svg>
    <div className="absolute left-[79px] top-[36px] text-[28px] leading-[28px]">du</div>
    <div className="absolute left-[125px] top-[26px] text-[34px] leading-[40px] font-['Noto_Sans_CJK_SC',sans-serif] tracking-[-1px]">经验</div>
    <div className="absolute left-0 top-[68px] text-[25px] leading-[30px] tracking-[0.6px] whitespace-nowrap">jingyan.baidu.com</div>
  </div>
);

export default function App() {
  return (
    <div className="relative w-[1094px] h-[707px] overflow-hidden bg-white flex flex-col font-['Noto_Sans_CJK_SC','Liberation_Sans',sans-serif]">
      <TitleBar />
      <TabBar />
      <Ribbon />
      <div className="flex flex-1 min-h-0">
        <SymbolPane />
        <CenterPane />
        <FillPane />
      </div>
      <Watermark />
    </div>
  );
}
